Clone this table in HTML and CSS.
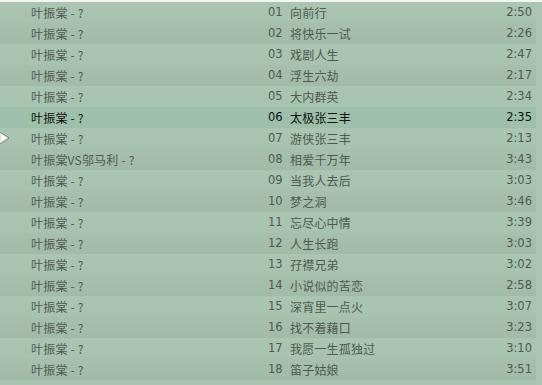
FILE: index.html
```html
<!DOCTYPE html>
<html lang="zh">
<head>
<meta charset="utf-8">
<link rel="stylesheet" href="styles.css">
</head>
<body>
<div class="panel">
  <div class="list">
    <div class="row"><span class="artist">叶振棠 - ?</span><span class="no">01</span><span class="title">向前行</span><span class="time">2:50</span></div>
    <div class="row"><span class="artist">叶振棠 - ?</span><span class="no">02</span><span class="title">将快乐一试</span><span class="time">2:26</span></div>
    <div class="row"><span class="artist">叶振棠 - ?</span><span class="no">03</span><span class="title">戏剧人生</span><span class="time">2:47</span></div>
    <div class="row"><span class="artist">叶振棠 - ?</span><span class="no">04</span><span class="title">浮生六劫</span><span class="time">2:17</span></div>
    <div class="row"><span class="artist">叶振棠 - ?</span><span class="no">05</span><span class="title">大内群英</span><span class="time">2:34</span></div>
    <div class="row active"><span class="artist">叶振棠 - ?</span><span class="no">06</span><span class="title">太极张三丰</span><span class="time">2:35</span></div>
    <div class="row playing"><svg class="arrow" width="10" height="12" viewBox="0 0 10 12"><path d="M0.5 0.5 L9 6 L0.5 11.5" fill="#fff" stroke="#6b7a70" stroke-width="1"/></svg><span class="artist">叶振棠 - ?</span><span class="no">07</span><span class="title">游侠张三丰</span><span class="time">2:13</span></div>
    <div class="row"><span class="artist">叶振棠VS邬马利 - ?</span><span class="no">08</span><span class="title">相爱千万年</span><span class="time">3:43</span></div>
    <div class="row"><span class="artist">叶振棠 - ?</span><span class="no">09</span><span class="title">当我人去后</span><span class="time">3:03</span></div>
    <div class="row"><span class="artist">叶振棠 - ?</span><span class="no">10</span><span class="title">梦之洞</span><span class="time">3:46</span></div>
    <div class="row"><span class="artist">叶振棠 - ?</span><span class="no">11</span><span class="title">忘尽心中情</span><span class="time">3:39</span></div>
    <div class="row"><span class="artist">叶振棠 - ?</span><span class="no">12</span><span class="title">人生长跑</span><span class="time">3:03</span></div>
    <div class="row"><span class="artist">叶振棠 - ?</span><span class="no">13</span><span class="title">孖襟兄弟</span><span class="time">3:02</span></div>
    <div class="row"><span class="artist">叶振棠 - ?</span><span class="no">14</span><span class="title">小说似的苦恋</span><span class="time">2:58</span></div>
    <div class="row"><span class="artist">叶振棠 - ?</span><span class="no">15</span><span class="title">深宵里一点火</span><span class="time">3:07</span></div>
    <div class="row"><span class="artist">叶振棠 - ?</span><span class="no">16</span><span class="title">找不着藉口</span><span class="time">3:23</span></div>
    <div class="row"><span class="artist">叶振棠 - ?</span><span class="no">17</span><span class="title">我愿一生孤独过</span><span class="time">3:10</span></div>
    <div class="row"><span class="artist">叶振棠 - ?</span><span class="no">18</span><span class="title">笛子姑娘</span><span class="time">3:51</span></div>
  </div>
  <div class="edge"></div>
</div>
</body>
</html>
```
FILE: styles.css
```css
html, body {
  margin: 0;
  padding: 0;
  width: 542px;
  height: 385px;
  overflow: hidden;
  background: #a8c3b0;
}
.panel {
  display: flex;
  width: 542px;
  height: 385px;
  border-top: 2px solid #f4f6f4;
  box-sizing: border-box;
  background: #a8c3b0;
}
.list {
  width: 536px;
  display: flex;
  flex-direction: column;
}
.edge {
  width: 6px;
  background: #adc6b4;
}
.row {
  position: relative;
  height: 21px;
  display: grid;
  grid-template-columns: 237px 22px 1fr auto;
  align-items: center;
  padding-left: 31px;
  padding-right: 4px;
  font-family: "Noto Sans CJK SC", "Noto Sans", sans-serif;
  font-size: 12px;
  color: #4e5a4f;
  background: linear-gradient(#aac5b2, #a7c2af);
}
.row:nth-child(even) {
  background: linear-gradient(#a6c0ad, #a2bba8);
}
.row.active {
  background: #9ebfaa;
  color: #111;
}
.artist, .title {
  white-space: nowrap;
  line-height: 21px;
  letter-spacing: 0.2px;
}
.no, .time {
  font-family: "DejaVu Sans", "Liberation Sans", sans-serif;
  font-size: 11.5px;
  line-height: 21px;
}
.time {
  text-align: right;
}
.arrow {
  position: absolute;
  left: 0;
  top: 4px;
}
```
